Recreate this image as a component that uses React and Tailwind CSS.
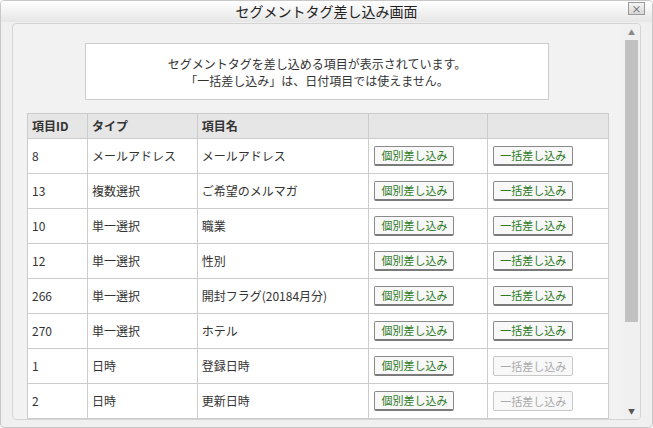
const rows=[["8","メールアドレス","メールアドレス",true],["13","複数選択","ご希望のメルマガ",true],["10","単一選択","職業",true],["12","単一選択","性別",true],["266","単一選択","開封フラグ(20184月分)",true],["270","単一選択","ホテル",true],["1","日時","登録日時",false],["2","日時","更新日時",false]];
const F={fontFamily:'"Noto Sans CJK JP","Noto Sans",sans-serif'};
function Btn({children,disabled}){return <span className={"inline-flex items-center justify-center h-[20px] px-[6px] rounded-[2px] text-[11px] leading-none bg-[#f8f8f8] "+(disabled?"border border-[#c8c8c8] text-[#aaaaaa]":"border border-[#8a8a8a] border-b-[2px] border-b-[#7a7a7a] text-[#2d7a1f]")}>{children}</span>}
export default function App(){return(
<div style={F} className="w-[653px] h-[428px] overflow-hidden bg-[#f0f0f0] border border-[#c8c8c8] rounded-[4px] flex flex-col text-[#333]">
 <div className="relative h-[21px] shrink-0 flex items-center justify-center bg-gradient-to-b from-[#ffffff] to-[#e6e6e6] text-[14px] text-[#222]">セグメントタグ差し込み画面
  <span className="absolute right-[7px] top-[1px] w-[17px] h-[13px] border border-[#999] bg-gradient-to-b from-[#f4f4f4] to-[#d8d8d8] text-[10px] leading-[11px] text-center text-[#555]">×</span></div>
 <div className="flex-1 min-h-0 mx-[11px] mb-[7px] mt-[1px] flex bg-[#f2f2f2] border border-[#d4d4d4] rounded-[4px] overflow-hidden">
  <div className="flex-1 flex flex-col pl-[14px] pr-[20px] overflow-hidden">
   <div className="shrink-0 mt-[19px] mx-[58px] w-[464px] h-[57px] bg-white border border-[#cccccc] flex flex-col items-center justify-center text-[12px] leading-[17px] text-[#333]">
    <div>セグメントタグを差し込める項目が表示されています。</div><div>「一括差し込み」は、日付項目では使えません。</div></div>
   <table className="shrink-0 mt-[13px] w-[582px] border-collapse text-[12px] bg-white">
    <thead><tr className="bg-[#e6e6e6] h-[25px] text-left font-bold">
     {[["項目ID",60],["タイプ",110],["項目名",172],["",119],["",121]].map(([t,w],i)=><th key={i} style={{width:w}} className="border border-[#cccccc] px-[4px] font-bold">{t}</th>)}</tr></thead>
    <tbody>{rows.map((r,i)=><tr key={i} className="h-[35px]">
     <td className="border border-[#cccccc] px-[4px]">{r[0]}</td>
     <td className="border border-[#cccccc] px-[4px]">{r[1]}</td>
     <td className="border border-[#cccccc] px-[4px]">{r[2]}</td>
     <td className="border border-[#cccccc] px-[5px]"><Btn>個別差し込み</Btn></td>
     <td className="border border-[#cccccc] px-[5px]"><Btn disabled={!r[3]}>一括差し込み</Btn></td></tr>)}
     <tr className="h-[35px]">{[0,1,2,3,4].map(i=><td key={i} className="border border-[#cccccc]"></td>)}</tr></tbody>
   </table>
  </div>
  <div className="w-[17px] bg-[#f0f0f0] flex flex-col items-center">
   <div className="h-[16px] text-[7px] text-[#888] leading-[16px]">▲</div>
   <div className="w-[13px] h-[282px] bg-[#c1c1c1]"></div>
   <div className="flex-1"></div>
   <div className="h-[16px] text-[7px] text-[#555] leading-[16px]">▼</div>
  </div>
 </div>
</div>)}
